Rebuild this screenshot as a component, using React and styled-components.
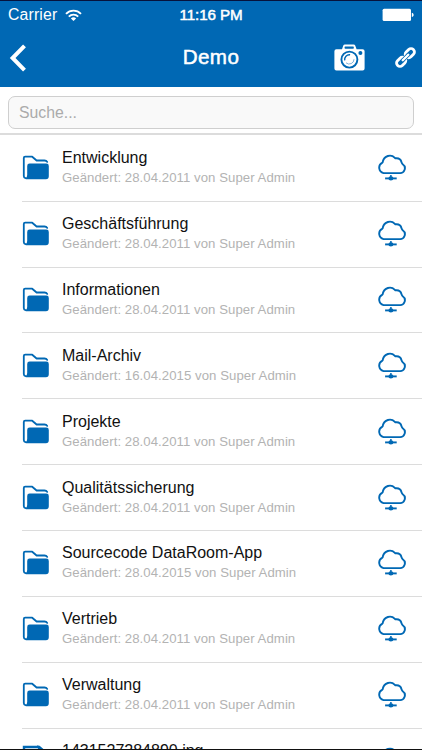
import React from 'react';
import styled, { createGlobalStyle } from 'styled-components';

const BLUE = '#0068b4';

const Global = createGlobalStyle`
  *, *::before, *::after { box-sizing: border-box; }
  html, body { margin: 0; padding: 0; background: #fff; }
  body { font-family: "Liberation Sans", Arial, sans-serif; overflow: hidden; }
  svg { display: block; flex: none; }
`;

const Screen = styled.div`
  width: 422px;
  height: 750px;
  display: flex;
  flex-direction: column;
  overflow: hidden;
  background: #fff;
  border-top: 1px solid #06123c;
  border-bottom: 1px solid #111;
`;

const Header = styled.header`
  flex: none;
  height: 86px;
  background: ${BLUE};
  color: #fff;
`;

const StatusBar = styled.div`
  display: grid;
  grid-template-columns: 1fr auto 1fr;
  align-items: center;
  height: 28px;
  padding: 0 8px 0 8px;
`;

const Carrier = styled.div`
  display: flex;
  align-items: center;
  gap: 8px;
  font-size: 15.8px;
  letter-spacing: 0.15px;
  line-height: 20px;
`;

const Time = styled.div`
  font-size: 15.2px;
  letter-spacing: -0.1px;
  line-height: 20px;
  -webkit-text-stroke: 0.5px #fff;
`;

const BatterySlot = styled.div`
  display: flex;
  justify-content: flex-end;
`;

const NavBar = styled.div`
  display: grid;
  grid-template-columns: 1fr auto 1fr;
  align-items: center;
  height: 57px;
  padding: 0 6px 0 9px;
`;

const Title = styled.h1`
  margin: 0 3px 2px 0;
  font-size: 20.6px;
  letter-spacing: 0.4px;
  font-weight: 400;
  line-height: 24px;
  -webkit-text-stroke: 0.5px #fff;
`;

const Actions = styled.div`
  display: flex;
  align-items: center;
  justify-content: flex-end;
  gap: 30px;
`;

const IconButton = styled.button`
  display: flex;
  justify-self: start;
  padding: 0;
  border: 0;
  background: none;
  color: inherit;
`;

const SearchBar = styled.div`
  flex: none;
  height: 48px;
  padding: 9px 8px 0;
  border-bottom: 2px solid #dcdcdc;
`;

const SearchInput = styled.input`
  display: block;
  width: 100%;
  height: 33px;
  padding: 0 10px;
  border: 1.5px solid #cfcfcf;
  border-radius: 7px;
  background: #f9f9f9;
  font: 15.8px "Liberation Sans", Arial, sans-serif;
  outline: none;
  &::placeholder { color: #ababab; opacity: 1; }
`;

const List = styled.ul`
  flex: 1;
  min-height: 0;
  margin: 0;
  padding: 0.9px 0 0 22px;
  list-style: none;
  overflow: hidden;
`;

const Row = styled.li`
  display: flex;
  align-items: center;
  height: 65.87px;
  padding: 0 16px 0 0;
  border-bottom: 1.5px solid #dcdcdc;
`;

const Labels = styled.div`
  flex: 1;
  min-width: 0;
  padding-left: 12px;
`;

const Name = styled.div`
  font-size: 16px;
  line-height: 20px;
  color: #111;
  white-space: nowrap;
`;

const Meta = styled.div`
  font-size: 13.2px;
  letter-spacing: 0.05px;
  line-height: 20px;
  color: #b3b3b3;
  white-space: nowrap;
`;

const Wifi = () => (
  <svg width="17" height="13" viewBox="0 0 17 13" fill="none" stroke="#fff" strokeWidth="1.9">
    <path d="M1 4.8C5.2.6 11.8.6 16 4.8" />
    <path d="M3.8 7.6C6.4 5 10.6 5 13.2 7.6" />
    <path d="M8.5 12 5.9 9.4C7.4 8 9.6 8 11.1 9.4Z" fill="#fff" stroke="none" />
  </svg>
);

const Battery = () => (
  <svg width="33" height="14" viewBox="0 0 33 14" fill="#fff">
    <rect x="1.6" y="0.8" width="28.4" height="12.2" rx="1.5" />
    <path d="M30.8 4.7c1.2.4 1.8 1.1 1.8 2.2s-.6 1.8-1.8 2.2z" />
  </svg>
);

const BackIcon = () => (
  <svg width="18" height="28" viewBox="0 0 18 28" fill="none" stroke="#fff" strokeWidth="4">
    <path d="M15.5 1.8 3.6 14l11.9 12.2" />
  </svg>
);

const CameraIcon = () => (
  <svg width="31" height="27" viewBox="0 0 31 27">
    <path d="M8 5.2 9.3 1.5Q9.7.4 10.9.4H19.6q1.2 0 1.6 1.1L22.6 5.2H28.6q2 0 2 2V24.4q0 2-2 2H2.4q-2 0-2-2V7.2q0-2 2-2Z" fill="#fff" />
    <rect x="10.6" y="2.4" width="9.2" height="2.3" rx="0.6" fill={BLUE} />
    <circle cx="15.4" cy="15.6" r="8" fill="none" stroke={BLUE} strokeWidth="1.9" />
    <path d="M10.7 16.4a4.8 4.8 0 0 1 5.4-5.6" fill="none" stroke={BLUE} strokeWidth="1.4" />
    <path d="M20 15.2a4.8 4.8 0 0 1-8 3.6" fill="none" stroke={BLUE} strokeWidth="0.5" />
    <circle cx="26.4" cy="9" r="2" fill={BLUE} />
  </svg>
);

const LinkIcon = () => (
  <svg width="21" height="21" viewBox="0 0 21 21" fill="none">
    <g transform="rotate(-45 10.5 10.5)">
      <rect x="-0.7" y="7.1" width="10.2" height="6.8" rx="3.3" stroke="#fff" strokeWidth="2.8" />
      <rect x="11.5" y="7.1" width="10.2" height="6.8" rx="3.3" stroke="#fff" strokeWidth="2.8" />
      <path d="M6.6 10.5h7.8" stroke={BLUE} strokeWidth="3.9" strokeLinecap="round" />
      <path d="M6.6 10.5h7.8" stroke="#fff" strokeWidth="2.4" strokeLinecap="round" />
    </g>
  </svg>
);

const FolderIcon = () => (
  <svg width="28" height="26" viewBox="0 0 28 26">
    <path
      d="M3.4 23.1Q1.8 22.8 1.8 21V3.1Q1.8 1.7 3.2 1.7H10.2L14.6 5.5H22.5Q24.4 5.5 25.2 6.9"
      fill="none"
      stroke={BLUE}
      strokeWidth="1.8"
      strokeLinecap="round"
      strokeLinejoin="round"
    />
    <path d="M7.6 8.5H24.3Q26.8 8.5 26.8 10.9V21.3Q26.8 24.2 23.9 24.2H4.1Q3 24.2 3.4 23.3 5.2 22.2 5.2 20V10.9Q5.2 8.5 7.6 8.5Z" fill={BLUE} />
  </svg>
);

const FileIcon = () => (
  <svg width="28" height="32" viewBox="0 0 28 32" fill="none" stroke={BLUE}>
    <path d="M2 31V2H17.2L25.5 9V31Z" strokeWidth="2.4" />
    <path d="M16.6 2 17.6 9h7.5Z" strokeWidth="1.8" fill={BLUE} />
  </svg>
);

const CloudIcon = () => (
  <svg width="29" height="30" viewBox="0 0 29 30" fill="none" stroke={BLUE}>
    <path
      d="M6.5 20.1H22.3A4.9 4.9 0 0 0 25.7 11.2Q24.7 10.3 24.5 9.2A5.2 5.2 0 0 0 19.1 5.3Q18.3 5.3 17.9 4.8A7.1 7.1 0 0 0 5.9 8.3Q5.9 9.5 5.1 9.9A5.5 5.5 0 0 0 6.5 20.1Z"
      strokeWidth="1.9"
      strokeLinejoin="round"
    />
    <path d="M8.1 25.4H19.7" strokeWidth="1.9" />
    <path d="M13.9 22.1V25.4" strokeWidth="1.5" />
    <ellipse cx="13.9" cy="25.4" rx="2.5" ry="2.1" fill={BLUE} stroke="none" />
  </svg>
);

const entries = [
  { name: 'Entwicklung', date: '28.04.2011' },
  { name: 'Geschäftsführung', date: '28.04.2011' },
  { name: 'Informationen', date: '28.04.2011' },
  { name: 'Mail-Archiv', date: '16.04.2015' },
  { name: 'Projekte', date: '28.04.2011' },
  { name: 'Qualitätssicherung', date: '28.04.2011' },
  { name: 'Sourcecode DataRoom-App', date: '28.04.2015' },
  { name: 'Vertrieb', date: '28.04.2011' },
  { name: 'Verwaltung', date: '28.04.2011' },
  { name: '1431527284890.jpg', date: '28.04.2015', file: true },
];

export default function App() {
  return (
    <>
      <Global />
      <Screen>
        <Header>
          <StatusBar>
            <Carrier>
              Carrier
              <Wifi />
            </Carrier>
            <Time>11:16 PM</Time>
            <BatterySlot>
              <Battery />
            </BatterySlot>
          </StatusBar>
          <NavBar>
            <IconButton aria-label="Zurück">
              <BackIcon />
            </IconButton>
            <Title>Demo</Title>
            <Actions>
              <IconButton aria-label="Kamera">
                <CameraIcon />
              </IconButton>
              <IconButton aria-label="Link">
                <LinkIcon />
              </IconButton>
            </Actions>
          </NavBar>
        </Header>
        <SearchBar>
          <SearchInput placeholder="Suche..." />
        </SearchBar>
        <List>
          {entries.map((entry) => (
            <Row key={entry.name}>
              {entry.file ? <FileIcon /> : <FolderIcon />}
              <Labels>
                <Name>{entry.name}</Name>
                <Meta>Geändert: {entry.date} von Super Admin</Meta>
              </Labels>
              <CloudIcon />
            </Row>
          ))}
        </List>
      </Screen>
    </>
  );
}
